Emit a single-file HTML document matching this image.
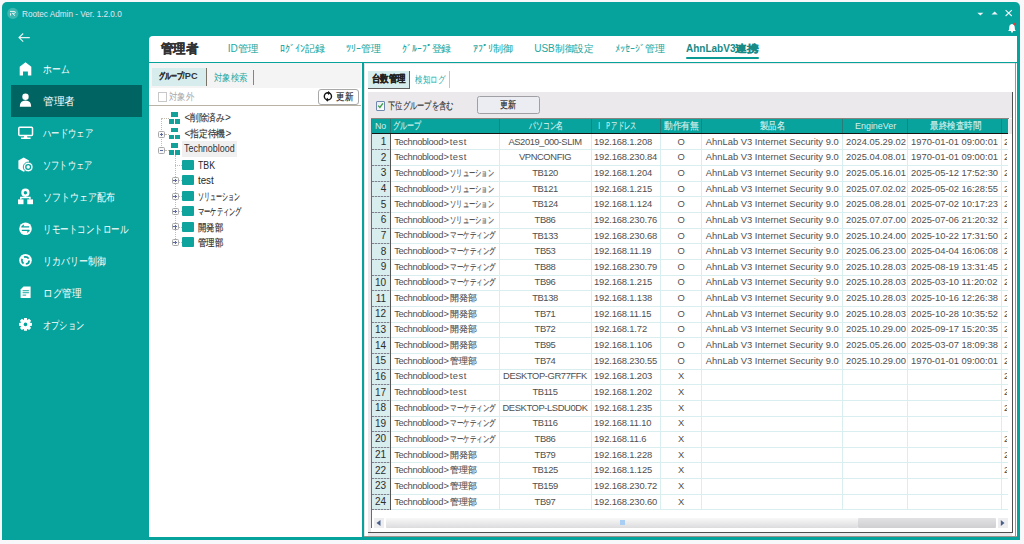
<!DOCTYPE html>
<html><head><meta charset="utf-8"><style>
*{box-sizing:border-box;margin:0;padding:0}
html,body{width:1024px;height:544px;overflow:hidden;background:#f8f7f9;font-family:"Liberation Sans",sans-serif;position:relative}
.a{position:absolute;white-space:nowrap}
.t{position:absolute;white-space:nowrap;display:inline-block;transform-origin:0 50%}
.jo{display:inline-block;white-space:nowrap;vertical-align:top}
.ji{display:inline-block;white-space:nowrap;transform-origin:0 50%;-webkit-text-stroke:var(--st,0.15px) currentColor}
.ns .ji{-webkit-text-stroke:0}
</style></head><body>
<div class="a" style="left:2px;top:2px;width:1018px;height:538px;background:#06a39d;border-radius:5px 5px 0 0"></div>
<svg class="a" style="left:0;top:0" width="24" height="24" viewBox="0 0 24 24"><circle cx="12.8" cy="13.4" r="5.6" fill="#3cb7b1"></circle><path d="M10 11.4 L14.3 11.4 Q15.6 11.6 15.4 12.5 Q15.1 13.4 13.6 13.4 L12.2 13.4 M10.6 13.2 L10.6 15.6 M12.6 13.5 L15 15.7" stroke="#eef8f8" stroke-width="1" fill="none"></path></svg>
<div class="t fit" style="left: 22px; top: 8.79px; font-size: 9.3px; line-height: 11.62px; color: rgb(226, 230, 242); --tw: 99.70; transform: scaleX(0.8808);">Rootec Admin - Ver. 1.2.0.0</div>
<svg class="a" style="left:970px;top:6px" width="50" height="16" viewBox="970 6 50 16"><path d="M977.3 12.8 L983.4 12.8 L980.35 15.6 Z" fill="#f2f2f8"></path><path d="M991.5 14.5 L997.8 14.5 L994.65 11.4 Z" fill="#f2f2f8"></path><path d="M1005.6 10.2 L1011.8 16 M1011.8 10.2 L1005.6 16" stroke="#f2f2f8" stroke-width="1.1"></path></svg>
<svg class="a" style="left:1004px;top:20px" width="16" height="14" viewBox="1004 20 16 14"><path d="M1009 30 Q1009.3 26.5 1009.6 25.6 Q1010.3 23.9 1012 23.9 Q1013.7 23.9 1014.4 25.6 Q1014.7 26.5 1015 30 L1016 31 L1008 31 Z" fill="#fff"></path><circle cx="1012" cy="31.6" r="1.1" fill="#fff"></circle><circle cx="1014.7" cy="24.1" r="1.3" fill="#e03a3a"></circle></svg>
<svg class="a" style="left:14px;top:30px" width="20" height="14" viewBox="14 30 20 14"><path d="M29.8 37.6 L19 37.6 M23.2 33.5 L19 37.6 L23.2 41.7" stroke="#e8f4f4" stroke-width="1.1" fill="none"></path></svg>
<div class="a" style="left:11px;top:85px;width:131px;height:32px;background:#006562"></div>
<svg class="a" style="left:0;top:0" width="149" height="340" viewBox="0 0 149 340"><path d="M25.5 62.2 L31.3 66.8 L31.3 75.4 L27.9 75.4 L27.9 71.4 L23 71.4 L23 75.4 L19.7 75.4 L19.7 66.8 Z" fill="#fff"></path><circle cx="25.5" cy="96.7" r="3.2" fill="#fff"></circle><path d="M19.8 106.7 Q19.8 100.6 25.5 100.6 Q31.2 100.6 31.2 106.7 Z" fill="#fff"></path><rect x="18.8" y="127.2" width="13.7" height="8.3" rx="1" fill="none" stroke="#fff" stroke-width="1.5"></rect><path d="M24.3 135.5 L26.9 135.5 L27.5 137.6 L30.6 137.6 L30.6 139 L21 139 L21 137.6 L23.7 137.6 Z" fill="#fff"></path><path d="M23.7 157.5 L29 160.5 L29 168.8 L23.7 171.8 L18.4 168.8 L18.4 160.5 Z" fill="#fff"></path><circle cx="28.2" cy="167" r="4.9" fill="#fff" stroke="#06a39d" stroke-width="0.9"></circle><circle cx="28.2" cy="167" r="2.4" fill="#fff" stroke="#06a39d" stroke-width="1.3"></circle><circle cx="25.4" cy="192.7" r="2.9" fill="none" stroke="#fff" stroke-width="2.4"></circle><path d="M25.4 195.8 L25.4 197.5 M20.8 199.5 L20.8 197.5 L30 197.5 L30 199.5" stroke="#fff" stroke-width="1.4" fill="none"></path><rect x="18" y="199.4" width="5.5" height="4.8" fill="#fff"></rect><rect x="27.3" y="199.4" width="5.7" height="4.8" fill="#fff"></rect><circle cx="25.5" cy="228.8" r="6.3" fill="#fff"></circle><path d="M29.2 226.9 L21.8 226.9 L23.8 224.9 M21.8 230.3 L29.2 230.3 L27.2 232.3" stroke="#06a39d" stroke-width="1.2" fill="none" stroke-linejoin="round"></path><circle cx="25.5" cy="260.2" r="6.3" fill="#fff"></circle><circle cx="25.5" cy="260.4" r="3.6" fill="none" stroke="#06a39d" stroke-width="1.7" stroke-dasharray="5.2 2.3"></circle><path d="M23.5 286.6 L30.6 286.6 L30.6 298.1 L20.6 298.1 L20.6 289.5 Z" fill="#fff"></path><path d="M22.6 290.6 L28.9 290.6 M22.6 292.6 L28.9 292.6 M22.6 295.1 L26.2 295.1" stroke="#06a39d" stroke-width="1.1" opacity="0.75"></path><path d="M31.94 322.96 L31.94 325.84 L29.74 326.19 L29.76 326.13 L31.07 327.94 L29.04 329.97 L27.23 328.66 L27.29 328.64 L26.94 330.84 L24.06 330.84 L23.71 328.64 L23.77 328.66 L21.96 329.97 L19.93 327.94 L21.24 326.13 L21.26 326.19 L19.06 325.84 L19.06 322.96 L21.26 322.61 L21.24 322.67 L19.93 320.86 L21.96 318.83 L23.77 320.14 L23.71 320.16 L24.06 317.96 L26.94 317.96 L27.29 320.16 L27.23 320.14 L29.04 318.83 L31.07 320.86 L29.76 322.67 L29.74 322.61 Z" fill="#fff"></path><circle cx="25.5" cy="324.4" r="1.8" fill="#06a39d"></circle></svg>
<div class="t fit ns" style="left:42.80px;top:63.44px;font-size:10.50px;line-height:13.12px;color:#fff;--tw:26.30"><span class="jo" style="width: 26.3px;"><span class="ji" style="transform: scaleX(0.797);">ホーム</span></span></div>
<div class="t fit ns" style="left:42.80px;top:94.94px;font-size:10.50px;line-height:13.12px;color:#fff;--tw:32.20"><span class="jo" style="width: 32.2px;"><span class="ji" style="transform: scaleX(0.9758);">管理者</span></span></div>
<div class="t fit ns" style="left:42.80px;top:126.94px;font-size:10.50px;line-height:13.12px;color:#fff;--tw:50.00"><span class="jo" style="width: 50px;"><span class="ji" style="transform: scaleX(0.7576);">ハードウェア</span></span></div>
<div class="t fit ns" style="left:42.80px;top:158.94px;font-size:10.50px;line-height:13.12px;color:#fff;--tw:49.20"><span class="jo" style="width: 49.2px;"><span class="ji" style="transform: scaleX(0.7455);">ソフトウェア</span></span></div>
<div class="t fit ns" style="left:42.80px;top:190.94px;font-size:10.50px;line-height:13.12px;color:#fff;--tw:71.50"><span class="jo" style="width: 71.5px;"><span class="ji" style="transform: scaleX(0.8125);">ソフトウェア配布</span></span></div>
<div class="t fit ns" style="left:42.80px;top:222.84px;font-size:10.50px;line-height:13.12px;color:#fff;--tw:85.30"><span class="jo" style="width: 85.3px;"><span class="ji" style="transform: scaleX(0.7755);">リモートコントロール</span></span></div>
<div class="t fit ns" style="left:42.80px;top:254.84px;font-size:10.50px;line-height:13.12px;color:#fff;--tw:62.80"><span class="jo" style="width: 62.8px;"><span class="ji" style="transform: scaleX(0.8156);">リカバリー制御</span></span></div>
<div class="t fit ns" style="left:42.80px;top:286.64px;font-size:10.50px;line-height:13.12px;color:#fff;--tw:38.90"><span class="jo" style="width: 38.9px;"><span class="ji" style="transform: scaleX(0.8841);">ログ管理</span></span></div>
<div class="t fit ns" style="left:42.80px;top:318.64px;font-size:10.50px;line-height:13.12px;color:#fff;--tw:41.20"><span class="jo" style="width: 41.2px;"><span class="ji" style="transform: scaleX(0.7491);">オプション</span></span></div>
<div class="a" style="left:149px;top:36px;width:868px;height:25.5px;background:#fff;border-radius:4px 0 0 0"></div>
<div class="t fit" style="left:160.70px;top:40.88px;font-size:13.00px;line-height:16.25px;color:#333;font-weight:bold;--st:0.35px;--tw:37.20"><span class="jo" style="width: 37.2px;"><span class="ji" style="transform: scaleX(0.9538);">管理者</span></span></div>
<div class="t fit" style="left:227.70px;top:42.75px;font-size:10.00px;line-height:12.50px;color:#22a8a2;--st:0.05px;--tw:30.70">ID<span class="jo" style="width: 20.7px;"><span class="ji" style="transform: scaleX(1.035);">管理</span></span></div>
<div class="t fit" style="left:279.90px;top:42.75px;font-size:10.00px;line-height:12.50px;color:#22a8a2;--st:0.05px;--tw:44.90"><span class="jo" style="width: 44.9px;"><span class="ji" style="transform: scaleX(0.9978);">ﾛｸﾞｲﾝ記録</span></span></div>
<div class="t fit" style="left:345.60px;top:42.75px;font-size:10.00px;line-height:12.50px;color:#22a8a2;--st:0.05px;--tw:34.80"><span class="jo" style="width: 34.8px;"><span class="ji" style="transform: scaleX(0.9943);">ﾂﾘｰ管理</span></span></div>
<div class="t fit" style="left:402.30px;top:42.75px;font-size:10.00px;line-height:12.50px;color:#22a8a2;--st:0.05px;--tw:49.20"><span class="jo" style="width: 49.2px;"><span class="ji" style="transform: scaleX(0.984);">ｸﾞﾙｰﾌﾟ登録</span></span></div>
<div class="t fit" style="left:472.60px;top:42.75px;font-size:10.00px;line-height:12.50px;color:#22a8a2;--st:0.05px;--tw:40.00"><span class="jo" style="width: 40px;"><span class="ji" style="transform: scaleX(1);">ｱﾌﾟﾘ制御</span></span></div>
<div class="t fit" style="left:534.20px;top:42.75px;font-size:10.00px;line-height:12.50px;color:#22a8a2;--st:0.05px;--tw:59.00">USB<span class="jo" style="width: 38.44px;"><span class="ji" style="transform: scaleX(0.9609);">制御設定</span></span></div>
<div class="t fit" style="left:614.70px;top:42.75px;font-size:10.00px;line-height:12.50px;color:#22a8a2;--st:0.05px;--tw:49.80"><span class="jo" style="width: 49.8px;"><span class="ji" style="transform: scaleX(0.996);">ﾒｯｾｰｼﾞ管理</span></span></div>
<div class="t fit" style="left:686.00px;top:42.75px;font-size:10.00px;line-height:12.50px;color:#178a86;font-weight:bold;--st:0.30px;--tw:72.80">AhnLabV3<span class="jo" style="width: 23.35px;"><span class="ji" style="transform: scaleX(1.1673);">連携</span></span></div>
<div class="a" style="left:686px;top:57px;width:72.8px;height:2.4px;background:#0a9a94;border-radius:1px"></div>
<div class="a" style="left:149px;top:63px;width:213px;height:474px;background:#fff"></div>
<div class="a" style="left:149px;top:63px;width:211.5px;height:25px;background:#f4f4f4"></div>
<div class="a" style="left:152px;top:68.2px;width:54.5px;height:17.4px;background:#d7ecec;border-right:1.1px solid #7a7468"></div>
<div class="t fit" style="left:158.50px;top:70.65px;font-size:9.20px;line-height:11.50px;color:#333;font-weight:bold;--st:0.30px;--tw:39.30"><span class="jo" style="width: 23.67px;"><span class="ji" style="transform: scaleX(0.6576);">グループ</span></span><span style="letter-spacing:0.10px">/PC</span></div>
<div class="t fit ns" style="left:213.60px;top:71.55px;font-size:10.00px;line-height:12.50px;color:#22aaa4;--tw:33.40"><span class="jo" style="width: 33.4px;"><span class="ji" style="transform: scaleX(0.835);">対象検索</span></span></div>
<div class="a" style="left:253px;top:69.6px;width:1.1px;height:15.6px;background:#8a8478"></div>
<div class="a" style="left:157.8px;top:92.2px;width:9px;height:9.4px;border:1px solid #c8c8c8;background:#fff"></div>
<div class="t fit ns" style="left:169.00px;top:90.75px;font-size:10.00px;line-height:12.50px;color:#a8a8a8;--tw:25.20"><span class="jo" style="width: 25.2px;"><span class="ji" style="transform: scaleX(0.84);">対象外</span></span></div>
<div class="a" style="left:149px;top:104.8px;width:211.5px;height:1px;background:#b9b2a6"></div>
<div class="a" style="left:317.6px;top:88.9px;width:41px;height:16.3px;background:#fff;border:1px solid #a8a8a8;border-radius:3px"></div>
<svg class="a" style="left:320px;top:88px" width="20" height="18" viewBox="320 88 20 18"><circle cx="327.9" cy="96.3" r="3.6" stroke="#151515" stroke-width="1.4" fill="none"></circle><path d="M328.6 91 L330 93 L328.6 95 L327.2 93 Z M327.3 97.7 L328.7 99.8 L327.3 101.8 L325.9 99.8 Z" fill="#151515"></path></svg>
<div class="t fit" style="left:335.80px;top:90.75px;font-size:10.00px;line-height:12.50px;color:#222;--tw:17.00"><span class="jo" style="width: 17px;"><span class="ji" style="transform: scaleX(0.85);">更新</span></span></div>
<div class="a" style="left:161px;top:118px;width:0;height:32px;border-left:1px dotted #c4bcae"></div>
<div class="a" style="left:161px;top:118px;width:8px;height:0;border-top:1px dotted #c4bcae"></div>
<div class="a" style="left:165px;top:134px;width:4px;height:0;border-top:1px dotted #c4bcae"></div>
<div class="a" style="left:165px;top:150px;width:4px;height:0;border-top:1px dotted #c4bcae"></div>
<div class="a" style="left:175px;top:155px;width:0;height:88px;border-left:1px dotted #c4bcae"></div>
<div class="a" style="left:175px;top:164.6px;width:7px;height:0;border-top:1px dotted #c4bcae"></div>
<div class="a" style="left:175px;top:180.3px;width:7px;height:0;border-top:1px dotted #c4bcae"></div>
<div class="a" style="left:175px;top:196.0px;width:7px;height:0;border-top:1px dotted #c4bcae"></div>
<div class="a" style="left:175px;top:211.2px;width:7px;height:0;border-top:1px dotted #c4bcae"></div>
<div class="a" style="left:175px;top:226.6px;width:7px;height:0;border-top:1px dotted #c4bcae"></div>
<div class="a" style="left:175px;top:242.3px;width:7px;height:0;border-top:1px dotted #c4bcae"></div>
<div class="a" style="left:171.2px;top:112.0px;width:6.6px;height:4.6px;background:#14a19a"></div><div class="a" style="left:169.0px;top:119.0px;width:5.3px;height:4.7px;background:#14a19a"></div><div class="a" style="left:175.3px;top:119.0px;width:5px;height:4.7px;background:#14a19a"></div>
<div class="a" style="left:171.2px;top:127.7px;width:6.6px;height:4.6px;background:#14a19a"></div><div class="a" style="left:169.0px;top:134.7px;width:5.3px;height:4.7px;background:#14a19a"></div><div class="a" style="left:175.3px;top:134.7px;width:5px;height:4.7px;background:#14a19a"></div>
<div class="a" style="left:171.2px;top:143.4px;width:6.6px;height:4.6px;background:#14a19a"></div><div class="a" style="left:169.0px;top:150.4px;width:5.3px;height:4.7px;background:#14a19a"></div><div class="a" style="left:175.3px;top:150.4px;width:5px;height:4.7px;background:#14a19a"></div>
<div class="a" style="left:158.0px;top:131.2px;width:7px;height:7px;border:1.2px solid #a8a8a8;background:#f8f8fa;border-radius:1.5px"></div><div class="a" style="left:159.8px;top:134.2px;width:3.4px;height:1px;background:#5a6aa0"></div><div class="a" style="left:161.0px;top:133.0px;width:1px;height:3.4px;background:#5a6aa0"></div>
<div class="a" style="left:158.0px;top:147.0px;width:7px;height:7px;border:1.2px solid #a8a8a8;background:#f8f8fa;border-radius:1.5px"></div><div class="a" style="left:159.8px;top:150.0px;width:3.4px;height:1px;background:#5a6aa0"></div>
<div class="a" style="left:182.4px;top:141px;width:54.6px;height:15.6px;background:#f0f0f0"></div>
<div class="t fit" style="left:184.40px;top:111.85px;font-size:10.00px;line-height:12.50px;color:#333;--tw:46.50">&lt;<span class="jo" style="width: 34.81px;"><span class="ji" style="transform: scaleX(0.8703);">削除済み</span></span>&gt;</div>
<div class="t fit" style="left:184.40px;top:127.55px;font-size:10.00px;line-height:12.50px;color:#333;--tw:47.00">&lt;<span class="jo" style="width: 35.31px;"><span class="ji" style="transform: scaleX(0.8828);">指定待機</span></span>&gt;</div>
<div class="t fit" style="left: 184.4px; top: 143.05px; font-size: 10px; line-height: 12.5px; color: rgb(51, 51, 51); --tw: 50.60; transform: scaleX(0.8921);">Technoblood</div>
<div class="a" style="left:182.4px;top:159.7px;width:11.4px;height:9.9px;background:#0ea39c;border-radius:1px"></div>
<div class="t fit" style="left: 197.5px; top: 159.55px; font-size: 10px; line-height: 12.5px; color: rgb(38, 38, 38); --tw: 17.00; transform: scaleX(0.8739);">TBK</div>
<div class="a" style="left:182.4px;top:175.4px;width:11.4px;height:9.9px;background:#0ea39c;border-radius:1px"></div>
<div class="a" style="left:171.5px;top:177.1px;width:7px;height:7px;border:1.2px solid #a8a8a8;background:#f8f8fa;border-radius:1.5px"></div><div class="a" style="left:173.3px;top:180.1px;width:3.4px;height:1px;background:#5a6aa0"></div><div class="a" style="left:174.5px;top:178.9px;width:1px;height:3.4px;background:#5a6aa0"></div>
<div class="t fit" style="left: 197.5px; top: 175.25px; font-size: 10px; line-height: 12.5px; color: rgb(38, 38, 38); --tw: 15.70; transform: scaleX(0.9736);">test</div>
<div class="a" style="left:182.4px;top:191.1px;width:11.4px;height:9.9px;background:#0ea39c;border-radius:1px"></div>
<div class="a" style="left:171.5px;top:192.8px;width:7px;height:7px;border:1.2px solid #a8a8a8;background:#f8f8fa;border-radius:1.5px"></div><div class="a" style="left:173.3px;top:195.8px;width:3.4px;height:1px;background:#5a6aa0"></div><div class="a" style="left:174.5px;top:194.6px;width:1px;height:3.4px;background:#5a6aa0"></div>
<div class="t fit" style="left:197.50px;top:190.95px;font-size:10.00px;line-height:12.50px;color:#262626;--tw:41.90"><span class="jo" style="width: 41.9px;"><span class="ji" style="transform: scaleX(0.5986);">ソリューション</span></span></div>
<div class="a" style="left:182.4px;top:206.3px;width:11.4px;height:9.9px;background:#0ea39c;border-radius:1px"></div>
<div class="a" style="left:171.5px;top:208.0px;width:7px;height:7px;border:1.2px solid #a8a8a8;background:#f8f8fa;border-radius:1.5px"></div><div class="a" style="left:173.3px;top:211.0px;width:3.4px;height:1px;background:#5a6aa0"></div><div class="a" style="left:174.5px;top:209.8px;width:1px;height:3.4px;background:#5a6aa0"></div>
<div class="t fit" style="left:197.50px;top:206.15px;font-size:10.00px;line-height:12.50px;color:#262626;--tw:43.70"><span class="jo" style="width: 43.7px;"><span class="ji" style="transform: scaleX(0.6243);">マーケティング</span></span></div>
<div class="a" style="left:182.4px;top:221.7px;width:11.4px;height:9.9px;background:#0ea39c;border-radius:1px"></div>
<div class="a" style="left:171.5px;top:223.4px;width:7px;height:7px;border:1.2px solid #a8a8a8;background:#f8f8fa;border-radius:1.5px"></div><div class="a" style="left:173.3px;top:226.4px;width:3.4px;height:1px;background:#5a6aa0"></div><div class="a" style="left:174.5px;top:225.2px;width:1px;height:3.4px;background:#5a6aa0"></div>
<div class="t fit" style="left:197.50px;top:221.55px;font-size:10.00px;line-height:12.50px;color:#262626;--tw:25.30"><span class="jo" style="width: 25.3px;"><span class="ji" style="transform: scaleX(0.8433);">開発部</span></span></div>
<div class="a" style="left:182.4px;top:237.4px;width:11.4px;height:9.9px;background:#0ea39c;border-radius:1px"></div>
<div class="a" style="left:171.5px;top:239.1px;width:7px;height:7px;border:1.2px solid #a8a8a8;background:#f8f8fa;border-radius:1.5px"></div><div class="a" style="left:173.3px;top:242.1px;width:3.4px;height:1px;background:#5a6aa0"></div><div class="a" style="left:174.5px;top:240.9px;width:1px;height:3.4px;background:#5a6aa0"></div>
<div class="t fit" style="left:197.50px;top:237.25px;font-size:10.00px;line-height:12.50px;color:#262626;--tw:25.30"><span class="jo" style="width: 25.3px;"><span class="ji" style="transform: scaleX(0.8433);">管理部</span></span></div>
<div class="a" style="left:363.7px;top:63px;width:653.3px;height:473.5px;background:#fff;border-left:1px solid #e4e4e4;border-top:1px solid #e8e8e8"></div>
<div class="a" style="left:368.2px;top:70.8px;width:42.2px;height:18.5px;background:#d7ecec;border-right:1.5px solid #606060;border-bottom:1.5px solid #606060"></div>
<div class="t fit" style="left:372.10px;top:72.75px;font-size:10.00px;line-height:12.50px;color:#222;font-weight:bold;--st:0.30px;--tw:33.80"><span class="jo" style="width: 33.8px;"><span class="ji" style="transform: scaleX(0.845);">台数管理</span></span></div>
<div class="t fit ns" style="left:415.00px;top:73.75px;font-size:10.00px;line-height:12.50px;color:#22aaa4;--tw:30.00"><span class="jo" style="width: 30px;"><span class="ji" style="transform: scaleX(0.75);">検知ログ</span></span></div>
<div class="a" style="left:448.5px;top:71px;width:1.3px;height:17px;background:#c8c4bc"></div>
<div class="a" style="left:368.3px;top:92.2px;width:644px;height:443.6px;background:#ebe9ec"></div>
<div class="a" style="left:375.5px;top:101.2px;width:9.3px;height:9.5px;border:1.3px solid #7088b0;background:linear-gradient(135deg,#e8eaf0,#fff);border-radius:1px"></div>
<svg class="a" style="left:375.6px;top:101px" width="9" height="9" viewBox="0 0 9 9"><path d="M2.2 4.6 L3.9 6.5 L6.9 2.4" stroke="#3aa048" stroke-width="1.4" fill="none"></path></svg>
<div class="t fit" style="left:388.00px;top:100.15px;font-size:10.00px;line-height:12.50px;color:#333;--tw:65.40"><span class="jo" style="width: 65.4px;"><span class="ji" style="transform: scaleX(0.7267);">下位グループを含む</span></span></div>
<div class="a" style="left:477.2px;top:96.2px;width:63px;height:17.6px;background:#ebedf2;border:1px solid #a0a0a4;border-radius:2.5px"></div>
<div class="t fit" style="left:500.20px;top:98.75px;font-size:10.00px;line-height:12.50px;color:#222;--tw:16.10"><span class="jo" style="width: 16.1px;"><span class="ji" style="transform: scaleX(0.805);">更新</span></span></div>
<div class="a" style="left:371px;top:118px;width:641px;height:414px;background:#fff"></div>
<div class="a" style="left:371px;top:118px;width:1.1px;height:410.3px;background:#6e6a64"></div>
<div class="a" style="left:371px;top:118px;width:637.5px;height:1px;background:#8a8480"></div>
<div class="a" style="left:1008.2px;top:118.8px;width:3.5px;height:15.5px;background:#ebe9ec"></div>
<div class="a" style="left:1011.8px;top:91.5px;width:1.1px;height:441.4px;background:#4e4e4e"></div>
<div class="a" style="left:368.3px;top:531.8px;width:644.6px;height:1.1px;background:#4e4e4e"></div>
<div class="a" style="left:1015.3px;top:63px;width:1.2px;height:473.5px;background:#9a958e"></div>
<div class="a" style="left:363.5px;top:535.5px;width:653px;height:1.1px;background:#9a958e"></div>
<div class="a" style="left:371.8px;top:118.8px;width:636.4px;height:14.3px;background:#08a39c"></div>
<div class="a" style="left:371.8px;top:133px;width:636.4px;height:1.4px;background:#151515"></div>
<div class="a" style="left:389.8px;top:118.8px;width:0.9px;height:14.3px;background:#2a7a78"></div>
<div class="a" style="left:498.9px;top:118.8px;width:0.9px;height:14.3px;background:#2a7a78"></div>
<div class="a" style="left:590.5px;top:118.8px;width:0.9px;height:14.3px;background:#2a7a78"></div>
<div class="a" style="left:660.1px;top:118.8px;width:0.9px;height:14.3px;background:#2a7a78"></div>
<div class="a" style="left:701.1px;top:118.8px;width:0.9px;height:14.3px;background:#2a7a78"></div>
<div class="a" style="left:842.2px;top:118.8px;width:0.9px;height:14.3px;background:#2a7a78"></div>
<div class="a" style="left:907.1px;top:118.8px;width:0.9px;height:14.3px;background:#2a7a78"></div>
<div class="a" style="left:1001.2px;top:118.8px;width:0.9px;height:14.3px;background:#2a7a78"></div>
<div class="t fit" style="left: 375.4px; top: 119.86px; font-size: 9.5px; line-height: 11.88px; color: rgb(212, 240, 238); --tw: 11.20; transform: scaleX(0.9213);">No</div>
<div class="t fit" style="left:393.20px;top:119.86px;font-size:9.50px;line-height:11.88px;color:#d4f0ee;--tw:28.10"><span class="jo" style="width: 28.1px;"><span class="ji" style="transform: scaleX(0.7025);">グループ</span></span></div>
<div class="t fit" style="left:528.70px;top:119.86px;font-size:9.50px;line-height:11.88px;color:#d4f0ee;--tw:34.20"><span class="jo" style="width: 34.2px;"><span class="ji" style="transform: scaleX(0.684);">パソコン名</span></span></div>
<div class="t fit" style="left:595.90px;top:119.86px;font-size:9.50px;line-height:11.88px;color:#d4f0ee;--tw:40.30"><span class="jo" style="width: 6.28px;"><span class="ji" style="transform: scaleX(0.6277);">Ｉ</span></span> <span class="jo" style="width: 31.38px;"><span class="ji" style="transform: scaleX(0.6277);">Ｐアドレス</span></span></div>
<div class="t fit" style="left:664.20px;top:119.86px;font-size:9.50px;line-height:11.88px;color:#d4f0ee;--tw:34.90"><span class="jo" style="width: 34.9px;"><span class="ji" style="transform: scaleX(0.8725);">動作有無</span></span></div>
<div class="t fit" style="left:760.20px;top:119.86px;font-size:9.50px;line-height:11.88px;color:#d4f0ee;--tw:24.90"><span class="jo" style="width: 24.9px;"><span class="ji" style="transform: scaleX(0.83);">製品名</span></span></div>
<div class="t fit" style="left: 855.1px; top: 119.86px; font-size: 9.5px; line-height: 11.88px; color: rgb(212, 240, 238); --tw: 41.20; transform: scaleX(0.9397);">EngineVer</div>
<div class="t fit" style="left:929.50px;top:119.86px;font-size:9.50px;line-height:11.88px;color:#d4f0ee;--tw:51.00"><span class="jo" style="width: 51px;"><span class="ji" style="transform: scaleX(0.85);">最終検査時間</span></span></div>
<div class="a" style="left:371.8px;top:134.3px;width:18.3px;height:375.6px;background:#d8eded"></div>
<div class="a" style="left:389.8px;top:134.3px;width:1.2px;height:375.6px;background:#555"></div>
<div class="a" style="left:390.5px;top:149.45px;width:617.7px;height:1px;background:#d9eeee"></div>
<div class="a" style="left:371.8px;top:149.45px;width:18px;height:1px;background:repeating-linear-gradient(90deg,#7c8290 0 2px,#c0c8cc 2px 3px)"></div>
<div class="a" style="left:390.5px;top:165.10px;width:617.7px;height:1px;background:#d9eeee"></div>
<div class="a" style="left:371.8px;top:165.10px;width:18px;height:1px;background:repeating-linear-gradient(90deg,#7c8290 0 2px,#c0c8cc 2px 3px)"></div>
<div class="a" style="left:390.5px;top:180.75px;width:617.7px;height:1px;background:#d9eeee"></div>
<div class="a" style="left:371.8px;top:180.75px;width:18px;height:1px;background:repeating-linear-gradient(90deg,#7c8290 0 2px,#c0c8cc 2px 3px)"></div>
<div class="a" style="left:390.5px;top:196.40px;width:617.7px;height:1px;background:#d9eeee"></div>
<div class="a" style="left:371.8px;top:196.40px;width:18px;height:1px;background:repeating-linear-gradient(90deg,#7c8290 0 2px,#c0c8cc 2px 3px)"></div>
<div class="a" style="left:390.5px;top:212.05px;width:617.7px;height:1px;background:#d9eeee"></div>
<div class="a" style="left:371.8px;top:212.05px;width:18px;height:1px;background:repeating-linear-gradient(90deg,#7c8290 0 2px,#c0c8cc 2px 3px)"></div>
<div class="a" style="left:390.5px;top:227.70px;width:617.7px;height:1px;background:#d9eeee"></div>
<div class="a" style="left:371.8px;top:227.70px;width:18px;height:1px;background:repeating-linear-gradient(90deg,#7c8290 0 2px,#c0c8cc 2px 3px)"></div>
<div class="a" style="left:390.5px;top:243.35px;width:617.7px;height:1px;background:#d9eeee"></div>
<div class="a" style="left:371.8px;top:243.35px;width:18px;height:1px;background:repeating-linear-gradient(90deg,#7c8290 0 2px,#c0c8cc 2px 3px)"></div>
<div class="a" style="left:390.5px;top:259.00px;width:617.7px;height:1px;background:#d9eeee"></div>
<div class="a" style="left:371.8px;top:259.00px;width:18px;height:1px;background:repeating-linear-gradient(90deg,#7c8290 0 2px,#c0c8cc 2px 3px)"></div>
<div class="a" style="left:390.5px;top:274.65px;width:617.7px;height:1px;background:#d9eeee"></div>
<div class="a" style="left:371.8px;top:274.65px;width:18px;height:1px;background:repeating-linear-gradient(90deg,#7c8290 0 2px,#c0c8cc 2px 3px)"></div>
<div class="a" style="left:390.5px;top:290.30px;width:617.7px;height:1px;background:#d9eeee"></div>
<div class="a" style="left:371.8px;top:290.30px;width:18px;height:1px;background:repeating-linear-gradient(90deg,#7c8290 0 2px,#c0c8cc 2px 3px)"></div>
<div class="a" style="left:390.5px;top:305.95px;width:617.7px;height:1px;background:#d9eeee"></div>
<div class="a" style="left:371.8px;top:305.95px;width:18px;height:1px;background:repeating-linear-gradient(90deg,#7c8290 0 2px,#c0c8cc 2px 3px)"></div>
<div class="a" style="left:390.5px;top:321.60px;width:617.7px;height:1px;background:#d9eeee"></div>
<div class="a" style="left:371.8px;top:321.60px;width:18px;height:1px;background:repeating-linear-gradient(90deg,#7c8290 0 2px,#c0c8cc 2px 3px)"></div>
<div class="a" style="left:390.5px;top:337.25px;width:617.7px;height:1px;background:#d9eeee"></div>
<div class="a" style="left:371.8px;top:337.25px;width:18px;height:1px;background:repeating-linear-gradient(90deg,#7c8290 0 2px,#c0c8cc 2px 3px)"></div>
<div class="a" style="left:390.5px;top:352.90px;width:617.7px;height:1px;background:#d9eeee"></div>
<div class="a" style="left:371.8px;top:352.90px;width:18px;height:1px;background:repeating-linear-gradient(90deg,#7c8290 0 2px,#c0c8cc 2px 3px)"></div>
<div class="a" style="left:390.5px;top:368.55px;width:617.7px;height:1px;background:#d9eeee"></div>
<div class="a" style="left:371.8px;top:368.55px;width:18px;height:1px;background:repeating-linear-gradient(90deg,#7c8290 0 2px,#c0c8cc 2px 3px)"></div>
<div class="a" style="left:390.5px;top:384.20px;width:617.7px;height:1px;background:#d9eeee"></div>
<div class="a" style="left:371.8px;top:384.20px;width:18px;height:1px;background:repeating-linear-gradient(90deg,#7c8290 0 2px,#c0c8cc 2px 3px)"></div>
<div class="a" style="left:390.5px;top:399.85px;width:617.7px;height:1px;background:#d9eeee"></div>
<div class="a" style="left:371.8px;top:399.85px;width:18px;height:1px;background:repeating-linear-gradient(90deg,#7c8290 0 2px,#c0c8cc 2px 3px)"></div>
<div class="a" style="left:390.5px;top:415.50px;width:617.7px;height:1px;background:#d9eeee"></div>
<div class="a" style="left:371.8px;top:415.50px;width:18px;height:1px;background:repeating-linear-gradient(90deg,#7c8290 0 2px,#c0c8cc 2px 3px)"></div>
<div class="a" style="left:390.5px;top:431.15px;width:617.7px;height:1px;background:#d9eeee"></div>
<div class="a" style="left:371.8px;top:431.15px;width:18px;height:1px;background:repeating-linear-gradient(90deg,#7c8290 0 2px,#c0c8cc 2px 3px)"></div>
<div class="a" style="left:390.5px;top:446.80px;width:617.7px;height:1px;background:#d9eeee"></div>
<div class="a" style="left:371.8px;top:446.80px;width:18px;height:1px;background:repeating-linear-gradient(90deg,#7c8290 0 2px,#c0c8cc 2px 3px)"></div>
<div class="a" style="left:390.5px;top:462.45px;width:617.7px;height:1px;background:#d9eeee"></div>
<div class="a" style="left:371.8px;top:462.45px;width:18px;height:1px;background:repeating-linear-gradient(90deg,#7c8290 0 2px,#c0c8cc 2px 3px)"></div>
<div class="a" style="left:390.5px;top:478.10px;width:617.7px;height:1px;background:#d9eeee"></div>
<div class="a" style="left:371.8px;top:478.10px;width:18px;height:1px;background:repeating-linear-gradient(90deg,#7c8290 0 2px,#c0c8cc 2px 3px)"></div>
<div class="a" style="left:390.5px;top:493.75px;width:617.7px;height:1px;background:#d9eeee"></div>
<div class="a" style="left:371.8px;top:493.75px;width:18px;height:1px;background:repeating-linear-gradient(90deg,#7c8290 0 2px,#c0c8cc 2px 3px)"></div>
<div class="a" style="left:390.5px;top:509.40px;width:617.7px;height:1px;background:#d9eeee"></div>
<div class="a" style="left:371.8px;top:509.40px;width:18px;height:1px;background:repeating-linear-gradient(90deg,#7c8290 0 2px,#c0c8cc 2px 3px)"></div>
<div class="a" style="left:498.9px;top:134.3px;width:1px;height:375.6px;background:#d9eeee"></div>
<div class="a" style="left:590.5px;top:134.3px;width:1px;height:375.6px;background:#d9eeee"></div>
<div class="a" style="left:660.1px;top:134.3px;width:1px;height:375.6px;background:#d9eeee"></div>
<div class="a" style="left:701.1px;top:134.3px;width:1px;height:375.6px;background:#d9eeee"></div>
<div class="a" style="left:842.2px;top:134.3px;width:1px;height:375.6px;background:#d9eeee"></div>
<div class="a" style="left:907.1px;top:134.3px;width:1px;height:375.6px;background:#d9eeee"></div>
<div class="a" style="left:1001.2px;top:134.3px;width:1px;height:375.6px;background:#d9eeee"></div>
<div class="a" style="left:371.8px;top:134.10px;width:14.4px;text-align:right;color:#2c2c2c;font-size:10px;line-height:15.65px">1</div>
<div class="t" style="left:394.2px;top:135.55px;font-size:9.40px;line-height:11.75px;color:#505050"><span style="letter-spacing:-0.4px">Technoblood</span><span style="margin:0 0.6px">&gt;</span><span style="letter-spacing:0.55px">test</span></div>
<div class="a" style="left:499.4px;top:133.60px;width:91.6px;text-align:center;color:#505050;font-size:9.4px;line-height:15.65px;letter-spacing:-0.4px;text-indent:-0.4px">AS2019_000-SLIM</div>
<div class="a" style="left:594.0px;top:133.60px;color:#505050;font-size:9.4px;line-height:15.65px;letter-spacing:-0.15px">192.168.1.208</div>
<div class="a" style="left:660.6px;top:133.60px;width:41.0px;text-align:center;color:#505050;font-size:9.4px;line-height:15.65px">O</div>
<div class="a" style="left:705.8px;top:133.60px;color:#505050;font-size:9.4px;line-height:15.65px">AhnLab V3 Internet Security 9.0</div>
<div class="a" style="left:846.0px;top:133.60px;color:#505050;font-size:9.4px;line-height:15.65px">2024.05.29.02</div>
<div class="a" style="left:911.0px;top:133.60px;color:#505050;font-size:9.4px;line-height:15.65px">1970-01-01 09:00:01</div>
<div class="a" style="left:1004.0px;top:133.60px;width:2.8px;overflow:hidden;color:#505050;font-size:9.4px;line-height:15.65px">2</div>
<div class="a" style="left:371.8px;top:149.75px;width:14.4px;text-align:right;color:#2c2c2c;font-size:10px;line-height:15.65px">2</div>
<div class="t" style="left:394.2px;top:151.20px;font-size:9.40px;line-height:11.75px;color:#505050"><span style="letter-spacing:-0.4px">Technoblood</span><span style="margin:0 0.6px">&gt;</span><span style="letter-spacing:0.55px">test</span></div>
<div class="a" style="left:499.4px;top:149.25px;width:91.6px;text-align:center;color:#505050;font-size:9.4px;line-height:15.65px;letter-spacing:-0.4px;text-indent:-0.4px">VPNCONFIG</div>
<div class="a" style="left:594.0px;top:149.25px;color:#505050;font-size:9.4px;line-height:15.65px;letter-spacing:-0.15px">192.168.230.84</div>
<div class="a" style="left:660.6px;top:149.25px;width:41.0px;text-align:center;color:#505050;font-size:9.4px;line-height:15.65px">O</div>
<div class="a" style="left:705.8px;top:149.25px;color:#505050;font-size:9.4px;line-height:15.65px">AhnLab V3 Internet Security 9.0</div>
<div class="a" style="left:846.0px;top:149.25px;color:#505050;font-size:9.4px;line-height:15.65px">2025.04.08.01</div>
<div class="a" style="left:911.0px;top:149.25px;color:#505050;font-size:9.4px;line-height:15.65px">1970-01-01 09:00:01</div>
<div class="a" style="left:1004.0px;top:149.25px;width:2.8px;overflow:hidden;color:#505050;font-size:9.4px;line-height:15.65px">2</div>
<div class="a" style="left:371.8px;top:165.40px;width:14.4px;text-align:right;color:#2c2c2c;font-size:10px;line-height:15.65px">3</div>
<div class="t fit" style="left:394.20px;top:166.85px;font-size:9.40px;line-height:11.75px;color:#505050;--tw:99.40"><span style="letter-spacing:-0.40px">Technoblood</span><span style="margin:0 0.7px 0 0.5px">&gt;</span><span class="jo" style="width: 43.95px;"><span class="ji" style="transform: scaleX(0.6976);">ソリューション</span></span></div>
<div class="a" style="left:499.4px;top:164.90px;width:91.6px;text-align:center;color:#505050;font-size:9.4px;line-height:15.65px;letter-spacing:-0.4px;text-indent:-0.4px">TB120</div>
<div class="a" style="left:594.0px;top:164.90px;color:#505050;font-size:9.4px;line-height:15.65px;letter-spacing:-0.15px">192.168.1.204</div>
<div class="a" style="left:660.6px;top:164.90px;width:41.0px;text-align:center;color:#505050;font-size:9.4px;line-height:15.65px">O</div>
<div class="a" style="left:705.8px;top:164.90px;color:#505050;font-size:9.4px;line-height:15.65px">AhnLab V3 Internet Security 9.0</div>
<div class="a" style="left:846.0px;top:164.90px;color:#505050;font-size:9.4px;line-height:15.65px">2025.05.16.01</div>
<div class="a" style="left:911.0px;top:164.90px;color:#505050;font-size:9.4px;line-height:15.65px">2025-05-12 17:52:30</div>
<div class="a" style="left:1004.0px;top:164.90px;width:2.8px;overflow:hidden;color:#505050;font-size:9.4px;line-height:15.65px">2</div>
<div class="a" style="left:371.8px;top:181.05px;width:14.4px;text-align:right;color:#2c2c2c;font-size:10px;line-height:15.65px">4</div>
<div class="t fit" style="left:394.20px;top:182.50px;font-size:9.40px;line-height:11.75px;color:#505050;--tw:99.40"><span style="letter-spacing:-0.40px">Technoblood</span><span style="margin:0 0.7px 0 0.5px">&gt;</span><span class="jo" style="width: 43.95px;"><span class="ji" style="transform: scaleX(0.6976);">ソリューション</span></span></div>
<div class="a" style="left:499.4px;top:180.55px;width:91.6px;text-align:center;color:#505050;font-size:9.4px;line-height:15.65px;letter-spacing:-0.4px;text-indent:-0.4px">TB121</div>
<div class="a" style="left:594.0px;top:180.55px;color:#505050;font-size:9.4px;line-height:15.65px;letter-spacing:-0.15px">192.168.1.215</div>
<div class="a" style="left:660.6px;top:180.55px;width:41.0px;text-align:center;color:#505050;font-size:9.4px;line-height:15.65px">O</div>
<div class="a" style="left:705.8px;top:180.55px;color:#505050;font-size:9.4px;line-height:15.65px">AhnLab V3 Internet Security 9.0</div>
<div class="a" style="left:846.0px;top:180.55px;color:#505050;font-size:9.4px;line-height:15.65px">2025.07.02.02</div>
<div class="a" style="left:911.0px;top:180.55px;color:#505050;font-size:9.4px;line-height:15.65px">2025-05-02 16:28:55</div>
<div class="a" style="left:1004.0px;top:180.55px;width:2.8px;overflow:hidden;color:#505050;font-size:9.4px;line-height:15.65px">2</div>
<div class="a" style="left:371.8px;top:196.70px;width:14.4px;text-align:right;color:#2c2c2c;font-size:10px;line-height:15.65px">5</div>
<div class="t fit" style="left:394.20px;top:198.15px;font-size:9.40px;line-height:11.75px;color:#505050;--tw:99.40"><span style="letter-spacing:-0.40px">Technoblood</span><span style="margin:0 0.7px 0 0.5px">&gt;</span><span class="jo" style="width: 43.95px;"><span class="ji" style="transform: scaleX(0.6976);">ソリューション</span></span></div>
<div class="a" style="left:499.4px;top:196.20px;width:91.6px;text-align:center;color:#505050;font-size:9.4px;line-height:15.65px;letter-spacing:-0.4px;text-indent:-0.4px">TB124</div>
<div class="a" style="left:594.0px;top:196.20px;color:#505050;font-size:9.4px;line-height:15.65px;letter-spacing:-0.15px">192.168.1.124</div>
<div class="a" style="left:660.6px;top:196.20px;width:41.0px;text-align:center;color:#505050;font-size:9.4px;line-height:15.65px">O</div>
<div class="a" style="left:705.8px;top:196.20px;color:#505050;font-size:9.4px;line-height:15.65px">AhnLab V3 Internet Security 9.0</div>
<div class="a" style="left:846.0px;top:196.20px;color:#505050;font-size:9.4px;line-height:15.65px">2025.08.28.01</div>
<div class="a" style="left:911.0px;top:196.20px;color:#505050;font-size:9.4px;line-height:15.65px">2025-07-02 10:17:23</div>
<div class="a" style="left:1004.0px;top:196.20px;width:2.8px;overflow:hidden;color:#505050;font-size:9.4px;line-height:15.65px">2</div>
<div class="a" style="left:371.8px;top:212.35px;width:14.4px;text-align:right;color:#2c2c2c;font-size:10px;line-height:15.65px">6</div>
<div class="t fit" style="left:394.20px;top:213.80px;font-size:9.40px;line-height:11.75px;color:#505050;--tw:99.40"><span style="letter-spacing:-0.40px">Technoblood</span><span style="margin:0 0.7px 0 0.5px">&gt;</span><span class="jo" style="width: 43.95px;"><span class="ji" style="transform: scaleX(0.6976);">ソリューション</span></span></div>
<div class="a" style="left:499.4px;top:211.85px;width:91.6px;text-align:center;color:#505050;font-size:9.4px;line-height:15.65px;letter-spacing:-0.4px;text-indent:-0.4px">TB86</div>
<div class="a" style="left:594.0px;top:211.85px;color:#505050;font-size:9.4px;line-height:15.65px;letter-spacing:-0.15px">192.168.230.76</div>
<div class="a" style="left:660.6px;top:211.85px;width:41.0px;text-align:center;color:#505050;font-size:9.4px;line-height:15.65px">O</div>
<div class="a" style="left:705.8px;top:211.85px;color:#505050;font-size:9.4px;line-height:15.65px">AhnLab V3 Internet Security 9.0</div>
<div class="a" style="left:846.0px;top:211.85px;color:#505050;font-size:9.4px;line-height:15.65px">2025.07.07.00</div>
<div class="a" style="left:911.0px;top:211.85px;color:#505050;font-size:9.4px;line-height:15.65px">2025-07-06 21:20:32</div>
<div class="a" style="left:1004.0px;top:211.85px;width:2.8px;overflow:hidden;color:#505050;font-size:9.4px;line-height:15.65px">2</div>
<div class="a" style="left:371.8px;top:228.00px;width:14.4px;text-align:right;color:#2c2c2c;font-size:10px;line-height:15.65px">7</div>
<div class="t fit" style="left:394.20px;top:229.45px;font-size:9.40px;line-height:11.75px;color:#505050;--tw:101.00"><span style="letter-spacing:-0.40px">Technoblood</span><span style="margin:0 0.7px 0 0.5px">&gt;</span><span class="jo" style="width: 45.55px;"><span class="ji" style="transform: scaleX(0.723);">マーケティング</span></span></div>
<div class="a" style="left:499.4px;top:227.50px;width:91.6px;text-align:center;color:#505050;font-size:9.4px;line-height:15.65px;letter-spacing:-0.4px;text-indent:-0.4px">TB133</div>
<div class="a" style="left:594.0px;top:227.50px;color:#505050;font-size:9.4px;line-height:15.65px;letter-spacing:-0.15px">192.168.230.68</div>
<div class="a" style="left:660.6px;top:227.50px;width:41.0px;text-align:center;color:#505050;font-size:9.4px;line-height:15.65px">O</div>
<div class="a" style="left:705.8px;top:227.50px;color:#505050;font-size:9.4px;line-height:15.65px">AhnLab V3 Internet Security 9.0</div>
<div class="a" style="left:846.0px;top:227.50px;color:#505050;font-size:9.4px;line-height:15.65px">2025.10.24.00</div>
<div class="a" style="left:911.0px;top:227.50px;color:#505050;font-size:9.4px;line-height:15.65px">2025-10-22 17:31:50</div>
<div class="a" style="left:1004.0px;top:227.50px;width:2.8px;overflow:hidden;color:#505050;font-size:9.4px;line-height:15.65px">2</div>
<div class="a" style="left:371.8px;top:243.65px;width:14.4px;text-align:right;color:#2c2c2c;font-size:10px;line-height:15.65px">8</div>
<div class="t fit" style="left:394.20px;top:245.10px;font-size:9.40px;line-height:11.75px;color:#505050;--tw:101.00"><span style="letter-spacing:-0.40px">Technoblood</span><span style="margin:0 0.7px 0 0.5px">&gt;</span><span class="jo" style="width: 45.55px;"><span class="ji" style="transform: scaleX(0.723);">マーケティング</span></span></div>
<div class="a" style="left:499.4px;top:243.15px;width:91.6px;text-align:center;color:#505050;font-size:9.4px;line-height:15.65px;letter-spacing:-0.4px;text-indent:-0.4px">TB53</div>
<div class="a" style="left:594.0px;top:243.15px;color:#505050;font-size:9.4px;line-height:15.65px;letter-spacing:-0.15px">192.168.11.19</div>
<div class="a" style="left:660.6px;top:243.15px;width:41.0px;text-align:center;color:#505050;font-size:9.4px;line-height:15.65px">O</div>
<div class="a" style="left:705.8px;top:243.15px;color:#505050;font-size:9.4px;line-height:15.65px">AhnLab V3 Internet Security 9.0</div>
<div class="a" style="left:846.0px;top:243.15px;color:#505050;font-size:9.4px;line-height:15.65px">2025.06.23.00</div>
<div class="a" style="left:911.0px;top:243.15px;color:#505050;font-size:9.4px;line-height:15.65px">2025-04-04 16:06:08</div>
<div class="a" style="left:1004.0px;top:243.15px;width:2.8px;overflow:hidden;color:#505050;font-size:9.4px;line-height:15.65px">2</div>
<div class="a" style="left:371.8px;top:259.30px;width:14.4px;text-align:right;color:#2c2c2c;font-size:10px;line-height:15.65px">9</div>
<div class="t fit" style="left:394.20px;top:260.75px;font-size:9.40px;line-height:11.75px;color:#505050;--tw:101.00"><span style="letter-spacing:-0.40px">Technoblood</span><span style="margin:0 0.7px 0 0.5px">&gt;</span><span class="jo" style="width: 45.55px;"><span class="ji" style="transform: scaleX(0.723);">マーケティング</span></span></div>
<div class="a" style="left:499.4px;top:258.80px;width:91.6px;text-align:center;color:#505050;font-size:9.4px;line-height:15.65px;letter-spacing:-0.4px;text-indent:-0.4px">TB88</div>
<div class="a" style="left:594.0px;top:258.80px;color:#505050;font-size:9.4px;line-height:15.65px;letter-spacing:-0.15px">192.168.230.79</div>
<div class="a" style="left:660.6px;top:258.80px;width:41.0px;text-align:center;color:#505050;font-size:9.4px;line-height:15.65px">O</div>
<div class="a" style="left:705.8px;top:258.80px;color:#505050;font-size:9.4px;line-height:15.65px">AhnLab V3 Internet Security 9.0</div>
<div class="a" style="left:846.0px;top:258.80px;color:#505050;font-size:9.4px;line-height:15.65px">2025.10.28.03</div>
<div class="a" style="left:911.0px;top:258.80px;color:#505050;font-size:9.4px;line-height:15.65px">2025-08-19 13:31:45</div>
<div class="a" style="left:1004.0px;top:258.80px;width:2.8px;overflow:hidden;color:#505050;font-size:9.4px;line-height:15.65px">2</div>
<div class="a" style="left:371.8px;top:274.95px;width:14.4px;text-align:right;color:#2c2c2c;font-size:10px;line-height:15.65px">10</div>
<div class="t fit" style="left:394.20px;top:276.40px;font-size:9.40px;line-height:11.75px;color:#505050;--tw:101.00"><span style="letter-spacing:-0.40px">Technoblood</span><span style="margin:0 0.7px 0 0.5px">&gt;</span><span class="jo" style="width: 45.55px;"><span class="ji" style="transform: scaleX(0.723);">マーケティング</span></span></div>
<div class="a" style="left:499.4px;top:274.45px;width:91.6px;text-align:center;color:#505050;font-size:9.4px;line-height:15.65px;letter-spacing:-0.4px;text-indent:-0.4px">TB96</div>
<div class="a" style="left:594.0px;top:274.45px;color:#505050;font-size:9.4px;line-height:15.65px;letter-spacing:-0.15px">192.168.1.215</div>
<div class="a" style="left:660.6px;top:274.45px;width:41.0px;text-align:center;color:#505050;font-size:9.4px;line-height:15.65px">O</div>
<div class="a" style="left:705.8px;top:274.45px;color:#505050;font-size:9.4px;line-height:15.65px">AhnLab V3 Internet Security 9.0</div>
<div class="a" style="left:846.0px;top:274.45px;color:#505050;font-size:9.4px;line-height:15.65px">2025.10.28.03</div>
<div class="a" style="left:911.0px;top:274.45px;color:#505050;font-size:9.4px;line-height:15.65px">2025-03-10 11:20:02</div>
<div class="a" style="left:1004.0px;top:274.45px;width:2.8px;overflow:hidden;color:#505050;font-size:9.4px;line-height:15.65px">2</div>
<div class="a" style="left:371.8px;top:290.60px;width:14.4px;text-align:right;color:#2c2c2c;font-size:10px;line-height:15.65px">11</div>
<div class="t fit" style="left:394.20px;top:292.05px;font-size:9.40px;line-height:11.75px;color:#505050;--tw:82.30"><span style="letter-spacing:-0.40px">Technoblood</span><span style="margin:0 0.7px 0 0.5px">&gt;</span><span class="jo" style="width: 26.85px;"><span class="ji" style="transform: scaleX(0.9943);">開発部</span></span></div>
<div class="a" style="left:499.4px;top:290.10px;width:91.6px;text-align:center;color:#505050;font-size:9.4px;line-height:15.65px;letter-spacing:-0.4px;text-indent:-0.4px">TB138</div>
<div class="a" style="left:594.0px;top:290.10px;color:#505050;font-size:9.4px;line-height:15.65px;letter-spacing:-0.15px">192.168.1.138</div>
<div class="a" style="left:660.6px;top:290.10px;width:41.0px;text-align:center;color:#505050;font-size:9.4px;line-height:15.65px">O</div>
<div class="a" style="left:705.8px;top:290.10px;color:#505050;font-size:9.4px;line-height:15.65px">AhnLab V3 Internet Security 9.0</div>
<div class="a" style="left:846.0px;top:290.10px;color:#505050;font-size:9.4px;line-height:15.65px">2025.10.28.03</div>
<div class="a" style="left:911.0px;top:290.10px;color:#505050;font-size:9.4px;line-height:15.65px">2025-10-16 12:26:38</div>
<div class="a" style="left:1004.0px;top:290.10px;width:2.8px;overflow:hidden;color:#505050;font-size:9.4px;line-height:15.65px">2</div>
<div class="a" style="left:371.8px;top:306.25px;width:14.4px;text-align:right;color:#2c2c2c;font-size:10px;line-height:15.65px">12</div>
<div class="t fit" style="left:394.20px;top:307.70px;font-size:9.40px;line-height:11.75px;color:#505050;--tw:82.30"><span style="letter-spacing:-0.40px">Technoblood</span><span style="margin:0 0.7px 0 0.5px">&gt;</span><span class="jo" style="width: 26.85px;"><span class="ji" style="transform: scaleX(0.9943);">開発部</span></span></div>
<div class="a" style="left:499.4px;top:305.75px;width:91.6px;text-align:center;color:#505050;font-size:9.4px;line-height:15.65px;letter-spacing:-0.4px;text-indent:-0.4px">TB71</div>
<div class="a" style="left:594.0px;top:305.75px;color:#505050;font-size:9.4px;line-height:15.65px;letter-spacing:-0.15px">192.168.11.15</div>
<div class="a" style="left:660.6px;top:305.75px;width:41.0px;text-align:center;color:#505050;font-size:9.4px;line-height:15.65px">O</div>
<div class="a" style="left:705.8px;top:305.75px;color:#505050;font-size:9.4px;line-height:15.65px">AhnLab V3 Internet Security 9.0</div>
<div class="a" style="left:846.0px;top:305.75px;color:#505050;font-size:9.4px;line-height:15.65px">2025.10.28.03</div>
<div class="a" style="left:911.0px;top:305.75px;color:#505050;font-size:9.4px;line-height:15.65px">2025-10-28 10:35:52</div>
<div class="a" style="left:1004.0px;top:305.75px;width:2.8px;overflow:hidden;color:#505050;font-size:9.4px;line-height:15.65px">2</div>
<div class="a" style="left:371.8px;top:321.90px;width:14.4px;text-align:right;color:#2c2c2c;font-size:10px;line-height:15.65px">13</div>
<div class="t fit" style="left:394.20px;top:323.35px;font-size:9.40px;line-height:11.75px;color:#505050;--tw:82.30"><span style="letter-spacing:-0.40px">Technoblood</span><span style="margin:0 0.7px 0 0.5px">&gt;</span><span class="jo" style="width: 26.85px;"><span class="ji" style="transform: scaleX(0.9943);">開発部</span></span></div>
<div class="a" style="left:499.4px;top:321.40px;width:91.6px;text-align:center;color:#505050;font-size:9.4px;line-height:15.65px;letter-spacing:-0.4px;text-indent:-0.4px">TB72</div>
<div class="a" style="left:594.0px;top:321.40px;color:#505050;font-size:9.4px;line-height:15.65px;letter-spacing:-0.15px">192.168.1.72</div>
<div class="a" style="left:660.6px;top:321.40px;width:41.0px;text-align:center;color:#505050;font-size:9.4px;line-height:15.65px">O</div>
<div class="a" style="left:705.8px;top:321.40px;color:#505050;font-size:9.4px;line-height:15.65px">AhnLab V3 Internet Security 9.0</div>
<div class="a" style="left:846.0px;top:321.40px;color:#505050;font-size:9.4px;line-height:15.65px">2025.10.29.00</div>
<div class="a" style="left:911.0px;top:321.40px;color:#505050;font-size:9.4px;line-height:15.65px">2025-09-17 15:20:35</div>
<div class="a" style="left:1004.0px;top:321.40px;width:2.8px;overflow:hidden;color:#505050;font-size:9.4px;line-height:15.65px">2</div>
<div class="a" style="left:371.8px;top:337.55px;width:14.4px;text-align:right;color:#2c2c2c;font-size:10px;line-height:15.65px">14</div>
<div class="t fit" style="left:394.20px;top:339.00px;font-size:9.40px;line-height:11.75px;color:#505050;--tw:82.30"><span style="letter-spacing:-0.40px">Technoblood</span><span style="margin:0 0.7px 0 0.5px">&gt;</span><span class="jo" style="width: 26.85px;"><span class="ji" style="transform: scaleX(0.9943);">開発部</span></span></div>
<div class="a" style="left:499.4px;top:337.05px;width:91.6px;text-align:center;color:#505050;font-size:9.4px;line-height:15.65px;letter-spacing:-0.4px;text-indent:-0.4px">TB95</div>
<div class="a" style="left:594.0px;top:337.05px;color:#505050;font-size:9.4px;line-height:15.65px;letter-spacing:-0.15px">192.168.1.106</div>
<div class="a" style="left:660.6px;top:337.05px;width:41.0px;text-align:center;color:#505050;font-size:9.4px;line-height:15.65px">O</div>
<div class="a" style="left:705.8px;top:337.05px;color:#505050;font-size:9.4px;line-height:15.65px">AhnLab V3 Internet Security 9.0</div>
<div class="a" style="left:846.0px;top:337.05px;color:#505050;font-size:9.4px;line-height:15.65px">2025.05.26.00</div>
<div class="a" style="left:911.0px;top:337.05px;color:#505050;font-size:9.4px;line-height:15.65px">2025-03-07 18:09:38</div>
<div class="a" style="left:1004.0px;top:337.05px;width:2.8px;overflow:hidden;color:#505050;font-size:9.4px;line-height:15.65px">2</div>
<div class="a" style="left:371.8px;top:353.20px;width:14.4px;text-align:right;color:#2c2c2c;font-size:10px;line-height:15.65px">15</div>
<div class="t fit" style="left:394.20px;top:354.65px;font-size:9.40px;line-height:11.75px;color:#505050;--tw:82.30"><span style="letter-spacing:-0.40px">Technoblood</span><span style="margin:0 0.7px 0 0.5px">&gt;</span><span class="jo" style="width: 26.85px;"><span class="ji" style="transform: scaleX(0.9943);">管理部</span></span></div>
<div class="a" style="left:499.4px;top:352.70px;width:91.6px;text-align:center;color:#505050;font-size:9.4px;line-height:15.65px;letter-spacing:-0.4px;text-indent:-0.4px">TB74</div>
<div class="a" style="left:594.0px;top:352.70px;color:#505050;font-size:9.4px;line-height:15.65px;letter-spacing:-0.15px">192.168.230.55</div>
<div class="a" style="left:660.6px;top:352.70px;width:41.0px;text-align:center;color:#505050;font-size:9.4px;line-height:15.65px">O</div>
<div class="a" style="left:705.8px;top:352.70px;color:#505050;font-size:9.4px;line-height:15.65px">AhnLab V3 Internet Security 9.0</div>
<div class="a" style="left:846.0px;top:352.70px;color:#505050;font-size:9.4px;line-height:15.65px">2025.10.29.00</div>
<div class="a" style="left:911.0px;top:352.70px;color:#505050;font-size:9.4px;line-height:15.65px">1970-01-01 09:00:01</div>
<div class="a" style="left:1004.0px;top:352.70px;width:2.8px;overflow:hidden;color:#505050;font-size:9.4px;line-height:15.65px">2</div>
<div class="a" style="left:371.8px;top:368.85px;width:14.4px;text-align:right;color:#2c2c2c;font-size:10px;line-height:15.65px">16</div>
<div class="t" style="left:394.2px;top:370.30px;font-size:9.40px;line-height:11.75px;color:#505050"><span style="letter-spacing:-0.4px">Technoblood</span><span style="margin:0 0.6px">&gt;</span><span style="letter-spacing:0.55px">test</span></div>
<div class="a" style="left:499.4px;top:368.35px;width:91.6px;text-align:center;color:#505050;font-size:9.4px;line-height:15.65px;letter-spacing:-0.4px;text-indent:-0.4px">DESKTOP-GR77FFK</div>
<div class="a" style="left:594.0px;top:368.35px;color:#505050;font-size:9.4px;line-height:15.65px;letter-spacing:-0.15px">192.168.1.203</div>
<div class="a" style="left:660.6px;top:368.35px;width:41.0px;text-align:center;color:#505050;font-size:9.4px;line-height:15.65px">X</div>
<div class="a" style="left:1004.0px;top:368.35px;width:2.8px;overflow:hidden;color:#505050;font-size:9.4px;line-height:15.65px">2</div>
<div class="a" style="left:371.8px;top:384.50px;width:14.4px;text-align:right;color:#2c2c2c;font-size:10px;line-height:15.65px">17</div>
<div class="t" style="left:394.2px;top:385.95px;font-size:9.40px;line-height:11.75px;color:#505050"><span style="letter-spacing:-0.4px">Technoblood</span><span style="margin:0 0.6px">&gt;</span><span style="letter-spacing:0.55px">test</span></div>
<div class="a" style="left:499.4px;top:384.00px;width:91.6px;text-align:center;color:#505050;font-size:9.4px;line-height:15.65px;letter-spacing:-0.4px;text-indent:-0.4px">TB115</div>
<div class="a" style="left:594.0px;top:384.00px;color:#505050;font-size:9.4px;line-height:15.65px;letter-spacing:-0.15px">192.168.1.202</div>
<div class="a" style="left:660.6px;top:384.00px;width:41.0px;text-align:center;color:#505050;font-size:9.4px;line-height:15.65px">X</div>
<div class="a" style="left:1004.0px;top:384.00px;width:2.8px;overflow:hidden;color:#505050;font-size:9.4px;line-height:15.65px">2</div>
<div class="a" style="left:371.8px;top:400.15px;width:14.4px;text-align:right;color:#2c2c2c;font-size:10px;line-height:15.65px">18</div>
<div class="t fit" style="left:394.20px;top:401.60px;font-size:9.40px;line-height:11.75px;color:#505050;--tw:101.00"><span style="letter-spacing:-0.40px">Technoblood</span><span style="margin:0 0.7px 0 0.5px">&gt;</span><span class="jo" style="width: 45.55px;"><span class="ji" style="transform: scaleX(0.723);">マーケティング</span></span></div>
<div class="a" style="left:499.4px;top:399.65px;width:91.6px;text-align:center;color:#505050;font-size:9.4px;line-height:15.65px;letter-spacing:-0.4px;text-indent:-0.4px">DESKTOP-LSDU0DK</div>
<div class="a" style="left:594.0px;top:399.65px;color:#505050;font-size:9.4px;line-height:15.65px;letter-spacing:-0.15px">192.168.1.235</div>
<div class="a" style="left:660.6px;top:399.65px;width:41.0px;text-align:center;color:#505050;font-size:9.4px;line-height:15.65px">X</div>
<div class="a" style="left:1004.0px;top:399.65px;width:2.8px;overflow:hidden;color:#505050;font-size:9.4px;line-height:15.65px">2</div>
<div class="a" style="left:371.8px;top:415.80px;width:14.4px;text-align:right;color:#2c2c2c;font-size:10px;line-height:15.65px">19</div>
<div class="t fit" style="left:394.20px;top:417.25px;font-size:9.40px;line-height:11.75px;color:#505050;--tw:101.00"><span style="letter-spacing:-0.40px">Technoblood</span><span style="margin:0 0.7px 0 0.5px">&gt;</span><span class="jo" style="width: 45.55px;"><span class="ji" style="transform: scaleX(0.723);">マーケティング</span></span></div>
<div class="a" style="left:499.4px;top:415.30px;width:91.6px;text-align:center;color:#505050;font-size:9.4px;line-height:15.65px;letter-spacing:-0.4px;text-indent:-0.4px">TB116</div>
<div class="a" style="left:594.0px;top:415.30px;color:#505050;font-size:9.4px;line-height:15.65px;letter-spacing:-0.15px">192.168.11.10</div>
<div class="a" style="left:660.6px;top:415.30px;width:41.0px;text-align:center;color:#505050;font-size:9.4px;line-height:15.65px">X</div>
<div class="a" style="left:371.8px;top:431.45px;width:14.4px;text-align:right;color:#2c2c2c;font-size:10px;line-height:15.65px">20</div>
<div class="t fit" style="left:394.20px;top:432.90px;font-size:9.40px;line-height:11.75px;color:#505050;--tw:101.00"><span style="letter-spacing:-0.40px">Technoblood</span><span style="margin:0 0.7px 0 0.5px">&gt;</span><span class="jo" style="width: 45.55px;"><span class="ji" style="transform: scaleX(0.723);">マーケティング</span></span></div>
<div class="a" style="left:499.4px;top:430.95px;width:91.6px;text-align:center;color:#505050;font-size:9.4px;line-height:15.65px;letter-spacing:-0.4px;text-indent:-0.4px">TB86</div>
<div class="a" style="left:594.0px;top:430.95px;color:#505050;font-size:9.4px;line-height:15.65px;letter-spacing:-0.15px">192.168.11.6</div>
<div class="a" style="left:660.6px;top:430.95px;width:41.0px;text-align:center;color:#505050;font-size:9.4px;line-height:15.65px">X</div>
<div class="a" style="left:1004.0px;top:430.95px;width:2.8px;overflow:hidden;color:#505050;font-size:9.4px;line-height:15.65px">2</div>
<div class="a" style="left:371.8px;top:447.10px;width:14.4px;text-align:right;color:#2c2c2c;font-size:10px;line-height:15.65px">21</div>
<div class="t fit" style="left:394.20px;top:448.55px;font-size:9.40px;line-height:11.75px;color:#505050;--tw:82.30"><span style="letter-spacing:-0.40px">Technoblood</span><span style="margin:0 0.7px 0 0.5px">&gt;</span><span class="jo" style="width: 26.85px;"><span class="ji" style="transform: scaleX(0.9943);">開発部</span></span></div>
<div class="a" style="left:499.4px;top:446.60px;width:91.6px;text-align:center;color:#505050;font-size:9.4px;line-height:15.65px;letter-spacing:-0.4px;text-indent:-0.4px">TB79</div>
<div class="a" style="left:594.0px;top:446.60px;color:#505050;font-size:9.4px;line-height:15.65px;letter-spacing:-0.15px">192.168.1.228</div>
<div class="a" style="left:660.6px;top:446.60px;width:41.0px;text-align:center;color:#505050;font-size:9.4px;line-height:15.65px">X</div>
<div class="a" style="left:1004.0px;top:446.60px;width:2.8px;overflow:hidden;color:#505050;font-size:9.4px;line-height:15.65px">2</div>
<div class="a" style="left:371.8px;top:462.75px;width:14.4px;text-align:right;color:#2c2c2c;font-size:10px;line-height:15.65px">22</div>
<div class="t fit" style="left:394.20px;top:464.20px;font-size:9.40px;line-height:11.75px;color:#505050;--tw:82.30"><span style="letter-spacing:-0.40px">Technoblood</span><span style="margin:0 0.7px 0 0.5px">&gt;</span><span class="jo" style="width: 26.85px;"><span class="ji" style="transform: scaleX(0.9943);">管理部</span></span></div>
<div class="a" style="left:499.4px;top:462.25px;width:91.6px;text-align:center;color:#505050;font-size:9.4px;line-height:15.65px;letter-spacing:-0.4px;text-indent:-0.4px">TB125</div>
<div class="a" style="left:594.0px;top:462.25px;color:#505050;font-size:9.4px;line-height:15.65px;letter-spacing:-0.15px">192.168.1.125</div>
<div class="a" style="left:660.6px;top:462.25px;width:41.0px;text-align:center;color:#505050;font-size:9.4px;line-height:15.65px">X</div>
<div class="a" style="left:1004.0px;top:462.25px;width:2.8px;overflow:hidden;color:#505050;font-size:9.4px;line-height:15.65px">2</div>
<div class="a" style="left:371.8px;top:478.40px;width:14.4px;text-align:right;color:#2c2c2c;font-size:10px;line-height:15.65px">23</div>
<div class="t fit" style="left:394.20px;top:479.85px;font-size:9.40px;line-height:11.75px;color:#505050;--tw:82.30"><span style="letter-spacing:-0.40px">Technoblood</span><span style="margin:0 0.7px 0 0.5px">&gt;</span><span class="jo" style="width: 26.85px;"><span class="ji" style="transform: scaleX(0.9943);">管理部</span></span></div>
<div class="a" style="left:499.4px;top:477.90px;width:91.6px;text-align:center;color:#505050;font-size:9.4px;line-height:15.65px;letter-spacing:-0.4px;text-indent:-0.4px">TB159</div>
<div class="a" style="left:594.0px;top:477.90px;color:#505050;font-size:9.4px;line-height:15.65px;letter-spacing:-0.15px">192.168.230.72</div>
<div class="a" style="left:660.6px;top:477.90px;width:41.0px;text-align:center;color:#505050;font-size:9.4px;line-height:15.65px">X</div>
<div class="a" style="left:371.8px;top:494.05px;width:14.4px;text-align:right;color:#2c2c2c;font-size:10px;line-height:15.65px">24</div>
<div class="t fit" style="left:394.20px;top:495.50px;font-size:9.40px;line-height:11.75px;color:#505050;--tw:82.30"><span style="letter-spacing:-0.40px">Technoblood</span><span style="margin:0 0.7px 0 0.5px">&gt;</span><span class="jo" style="width: 26.85px;"><span class="ji" style="transform: scaleX(0.9943);">管理部</span></span></div>
<div class="a" style="left:499.4px;top:493.55px;width:91.6px;text-align:center;color:#505050;font-size:9.4px;line-height:15.65px;letter-spacing:-0.4px;text-indent:-0.4px">TB97</div>
<div class="a" style="left:594.0px;top:493.55px;color:#505050;font-size:9.4px;line-height:15.65px;letter-spacing:-0.15px">192.168.230.60</div>
<div class="a" style="left:660.6px;top:493.55px;width:41.0px;text-align:center;color:#505050;font-size:9.4px;line-height:15.65px">X</div>
<div class="a" style="left:372px;top:510px;width:636px;height:21.5px;background:#fff"></div>
<div class="a" style="left:373.5px;top:517.6px;width:10.3px;height:10.2px;background:#eeeef0"></div>
<svg class="a" style="left:373px;top:517.6px" width="11" height="10" viewBox="0 0 11 10"><path d="M3.5 5 L7.5 2 L7.5 8 Z" fill="#4a5e8a"></path></svg>
<div class="a" style="left:386px;top:518.4px;width:472px;height:9.5px;background:linear-gradient(#f8f8f8,#dcdcde);border-radius:1px"></div>
<div class="a" style="left:858px;top:518px;width:138px;height:9.5px;background:linear-gradient(#e2e2e4,#cfcfd2);border-radius:1px"></div>
<div class="a" style="left:619.6px;top:520px;width:5.6px;height:5px;background:#a8cef4"></div>
<div class="a" style="left:998.2px;top:517.6px;width:9.4px;height:10px;background:#eeeef0"></div>
<svg class="a" style="left:998.2px;top:517.6px" width="10" height="10" viewBox="0 0 10 10"><path d="M6.5 5 L2.8 2 L2.8 8 Z" fill="#4a5e8a"></path></svg>
<script>
(function(){
var els=document.querySelectorAll('.fit');
for(var i=0;i<els.length;i++){var e=els[i];
 var tw=parseFloat(e.style.getPropertyValue('--tw'));
 var jo=e.querySelectorAll('.jo');
 e.style.transform='';
 for(var k=0;k<jo.length;k++){jo[k].style.width='';jo[k].firstChild.style.transform='';}
 var W=e.getBoundingClientRect().width;
 if(!(W>0&&tw>0))continue;
 if(jo.length==0){e.style.transform='scaleX('+(tw/W).toFixed(4)+')';continue;}
 var J=0,ws=[];
 for(var k=0;k<jo.length;k++){var jw=jo[k].getBoundingClientRect().width;ws.push(jw);J+=jw;}
 var L=W-J; var s=(tw-L)/J;
 if(s<=0.2){e.style.transform='scaleX('+(tw/W).toFixed(4)+')';continue;}
 for(var k=0;k<jo.length;k++){jo[k].style.width=(ws[k]*s).toFixed(2)+'px';jo[k].firstChild.style.transform='scaleX('+s.toFixed(4)+')';}
}
})();
</script>
</body></html>
